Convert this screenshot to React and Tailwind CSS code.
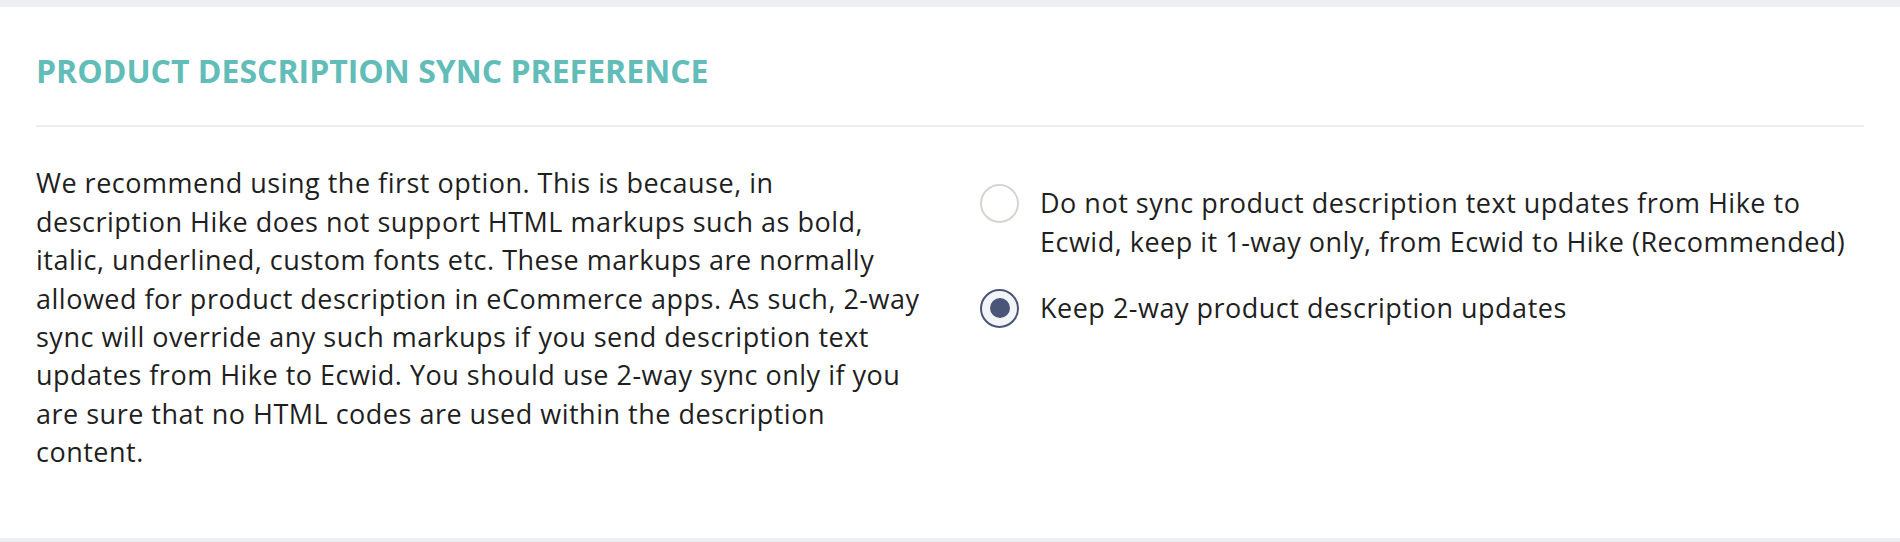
import { useState } from 'react';

const options = [
  {
    id: 'one-way',
    label: 'Do not sync product description text updates from Hike to Ecwid, keep it 1-way only, from Ecwid to Hike (Recommended)',
  },
  {
    id: 'two-way',
    label: 'Keep 2-way product description updates',
  },
];

function Radio({ checked }) {
  return (
    <span className="h-[38.4px] flex items-center shrink-0">
      {checked ? (
        <span className="w-[39px] h-[39px] rounded-full border-2 border-[#4a5378] bg-[#f3f4f8] flex items-center justify-center">
          <span className="w-[20px] h-[20px] rounded-full bg-[#4b5577]" />
        </span>
      ) : (
        <span className="w-[39px] h-[39px] rounded-full border-2 border-[#d6d4d0] bg-white" />
      )}
    </span>
  );
}

export default function App() {
  const [value, setValue] = useState('two-way');

  return (
    <div className="bg-[#eceef2] pt-[7px] pb-[5px] font-['Open_Sans',sans-serif]">
      <section className="bg-white px-[36px] pt-[45px] pb-[66px]">
        <h2 className="text-[32px] leading-[38.4px] font-bold text-[#62bcb8] uppercase">
          Product Description Sync Preference
        </h2>
        <div className="mt-[35px] h-[2px] bg-[#ececee]" />
        <div className="mt-[37px] grid grid-cols-2 gap-x-[60px] text-[27px] leading-[38.4px] tracking-[0.5px] text-[#1f1f1f]">
          <p>
            We recommend using the first option. This is because, in description Hike does not support HTML
            markups such as bold, italic, underlined, custom fonts etc. These markups are normally allowed for
            product description in eCommerce apps. As such, 2-way sync will override any such markups if you send
            description text updates from Hike to Ecwid. You should use 2-way sync only if you are sure that no
            HTML codes are used within the description content.
          </p>
          <div className="pt-[20px] flex flex-col gap-[28px]">
            {options.map((opt) => (
              <label
                key={opt.id}
                className="flex items-start gap-[21px] cursor-pointer"
                onClick={() => setValue(opt.id)}
              >
                <Radio checked={value === opt.id} />
                <span>{opt.label}</span>
              </label>
            ))}
          </div>
        </div>
      </section>
    </div>
  );
}
